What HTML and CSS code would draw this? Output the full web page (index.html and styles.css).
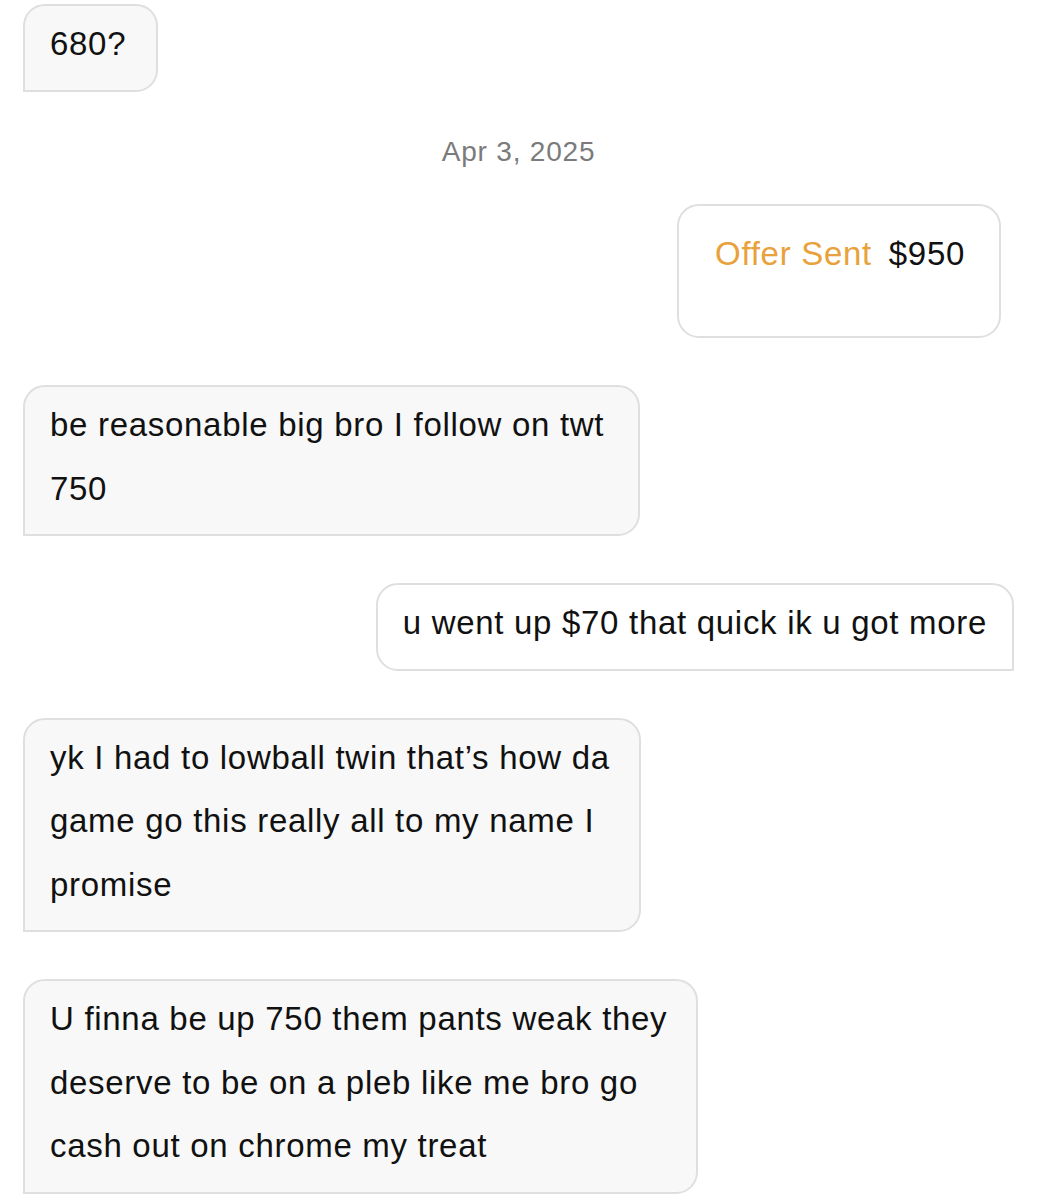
FILE: index.html
```html
<!DOCTYPE html>
<html lang="en">
<head>
  <meta charset="UTF-8">
  <meta name="viewport" content="width=device-width, initial-scale=1.0">
  <title>Messages</title>
  <link rel="stylesheet" href="styles.css">
</head>
<body>
  <div class="thread">
    <div class="msg in">
      <div class="bubble short">680?</div>
    </div>

    <div class="date">Apr 3, 2025</div>

    <div class="msg out">
      <div class="bubble offer">
        <span class="offer-label">Offer Sent</span>
        <span class="offer-price">$950</span>
      </div>
    </div>

    <div class="msg in">
      <div class="bubble w-617">be reasonable big bro I follow on twt 750</div>
    </div>

    <div class="msg out">
      <div class="bubble">u went up $70 that quick ik u got more</div>
    </div>

    <div class="msg in">
      <div class="bubble w-618">yk I had to lowball twin that’s how da game go this really all to my name I promise</div>
    </div>

    <div class="msg in">
      <div class="bubble w-675">U finna be up 750 them pants weak they deserve to be on a pleb like me bro go cash out on chrome my treat</div>
    </div>
  </div>
</body>
</html>
```

FILE: styles.css
```css
body {
  margin: 0;
  background: #ffffff;
  font-family: "Liberation Sans", Arial, sans-serif;
  color: #111;
}

.thread {
  display: flex;
  flex-direction: column;
  padding: 4px 23px 0;
}

.msg {
  display: flex;
}

.msg + .msg {
  margin-top: 47px;
}

.msg.in {
  justify-content: flex-start;
}

.msg.out {
  justify-content: flex-end;
}

.bubble {
  box-sizing: border-box;
  padding: 6px 25px 14px;
  border: 2px solid #dfdfdf;
  border-radius: 22px;
  font-size: 33px;
  letter-spacing: 0.7px;
  line-height: 63.5px;
}

.bubble.short {
  padding-right: 30px;
}

.msg.in .bubble {
  background: #f8f8f8;
  border-bottom-left-radius: 0;
}

.msg.out .bubble {
  background: #ffffff;
  border-bottom-right-radius: 0;
}

.msg.out .bubble.offer {
  border-bottom-right-radius: 22px;
  margin-right: 13px;
  padding: 16px 34px 51px 36px;
}

.offer-label {
  color: #e9a13b;
  margin-right: 7px;
}

.offer-price {
  color: #111;
}

.w-617 { width: 617px; }
.w-618 { width: 618px; }
.w-675 { width: 675px; }

.date {
  margin: 43px 0 35px;
  text-align: center;
  font-size: 28px;
  line-height: 34px;
  letter-spacing: 0.8px;
  color: #7b7b7b;
}
```
